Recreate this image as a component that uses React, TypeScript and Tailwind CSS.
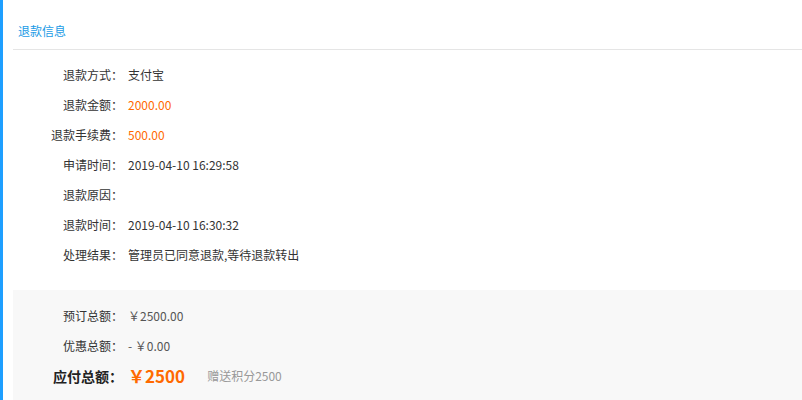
import React from 'react';

type Row = { label: string; value: string; orange?: boolean };

const refundRows: Row[] = [
  { label: '退款方式：', value: '支付宝' },
  { label: '退款金额：', value: '2000.00', orange: true },
  { label: '退款手续费：', value: '500.00', orange: true },
  { label: '申请时间：', value: '2019-04-10 16:29:58' },
  { label: '退款原因：', value: '' },
  { label: '退款时间：', value: '2019-04-10 16:30:32' },
  { label: '处理结果：', value: '管理员已同意退款,等待退款转出' },
];

export default function App() {
  return (
    <div
      className="flex min-h-[400px] w-full bg-white text-[12px] text-[#333]"
      style={{ fontFamily: '"Noto Sans CJK SC", "Liberation Sans", sans-serif' }}
    >
      <div className="w-[3px] shrink-0 bg-[#1e9fff]" />
      <div className="ml-[10px] flex-1">
        {/* Header */}
        <div className="border-b border-[#e5e5e5] pt-[22px] pb-[9px] pl-[5px] leading-[18px] text-[#1a9be6]">
          退款信息
        </div>

        {/* Refund details */}
        <div className="pt-[10px] pb-[20px]">
          {refundRows.map((row) => (
            <div key={row.label} className="flex h-[30px] items-center">
              <span className="w-[110px] text-right">{row.label}</span>
              <span className={`ml-[5px] ${row.orange ? 'text-[#ff6a00]' : ''}`}>
                {row.value}
              </span>
            </div>
          ))}
        </div>

        {/* Totals */}
        <div className="min-h-[110px] bg-[#f8f8f8] pt-[11px]">
          <div className="flex h-[30px] items-center">
            <span className="w-[110px] text-right">预订总额：</span>
            <span className="ml-[5px] text-[#555]">￥2500.00</span>
          </div>
          <div className="flex h-[30px] items-center">
            <span className="w-[110px] text-right">优惠总额：</span>
            <span className="ml-[5px] text-[#555]">- ￥0.00</span>
          </div>
          <div className="flex h-[30px] items-center">
            <span className="w-[110px] text-right text-[14px] font-bold text-[#222]">应付总额：</span>
            <span className="ml-[5px] text-[17px] font-bold text-[#ff6a00]">￥2500</span>
            <span className="ml-[22px] text-[#999]">赠送积分2500</span>
          </div>
        </div>
      </div>
    </div>
  );
}
